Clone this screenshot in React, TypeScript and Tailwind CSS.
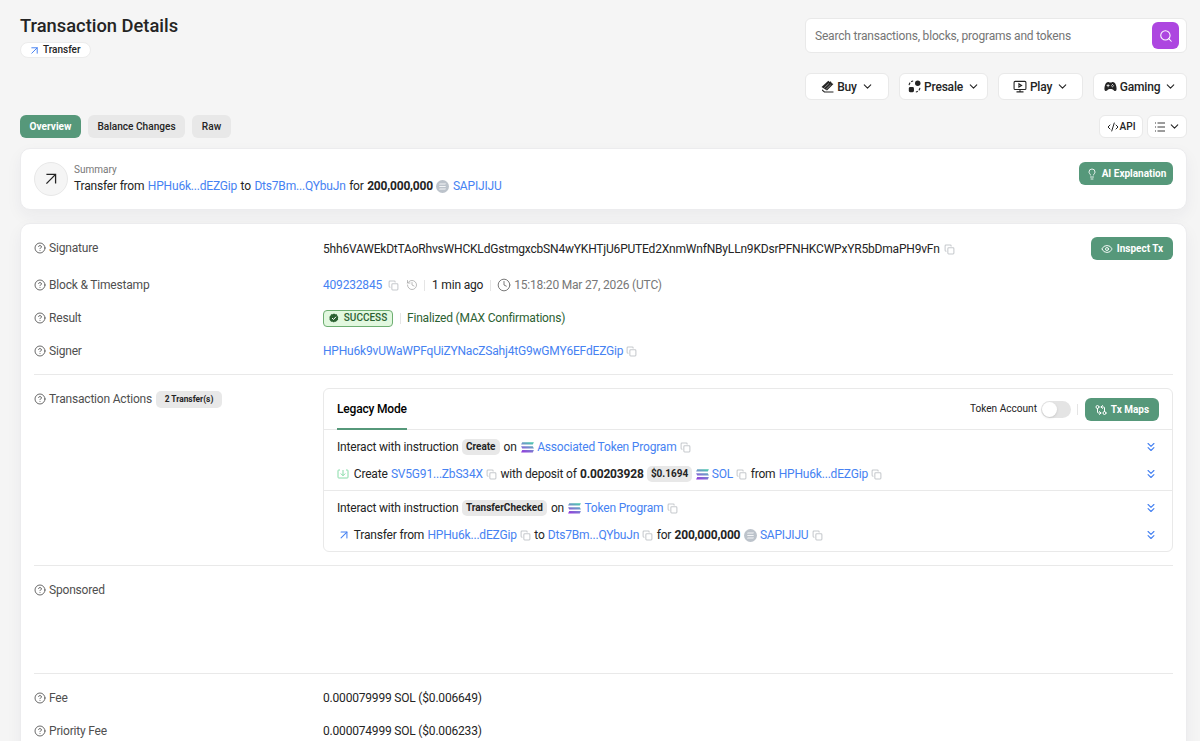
import type { ReactNode } from 'react';
import {
  ArrowUpRight,
  ChevronDown,
  ChevronsDown,
  CircleQuestionMark,
  Clock,
  CodeXml,
  Eye,
  GitCompareArrows,
  History,
  Lightbulb,
  Search,
} from 'lucide-react';
import { IoGameController } from 'react-icons/io5';

const CopyIcon = () => (
  <svg viewBox="0 0 20 20" className="size-[11px] shrink-0 text-[#c6c9cd]" fill="none" stroke="currentColor" strokeWidth="1.9">
    <rect x="7" y="7" width="11" height="11" rx="1.5" />
    <path d="M4.5 13H3.5A1.5 1.5 0 0 1 2 11.5V3.5A1.5 1.5 0 0 1 3.5 2H11.5A1.5 1.5 0 0 1 13 3.5V4.5" />
  </svg>
);

const SolanaIcon = () => (
  <svg viewBox="0 0 13 11" className="h-[11px] w-[13px] shrink-0">
    <defs>
      <linearGradient id="sol" x1="4" y1="11" x2="9" y2="0" gradientUnits="userSpaceOnUse">
        <stop offset="0" stopColor="#9140dc" />
        <stop offset="0.5" stopColor="#7a86cf" />
        <stop offset="1" stopColor="#4fc4b0" />
      </linearGradient>
    </defs>
    <path d="M1.2 0.3H12.9L11.8 2.6H0.1ZM0.1 4.2H11.8L12.9 6.5H1.2ZM1.2 8.1H12.9L11.8 10.4H0.1Z" fill="url(#sol)" />
  </svg>
);

const TokenIcon = () => (
  <svg viewBox="0 0 14 14" className="size-[13px] shrink-0">
    <circle cx="7" cy="7" r="7" fill="#bcc3cb" />
    <path d="M4 3.7H10.8L10 4.9H3.2ZM3.2 6.4H10L10.8 7.6H4ZM4 9.1H10.8L10 10.3H3.2Z" fill="#f3f5f7" />
  </svg>
);

const BuyIcon = () => (
  <svg viewBox="0 0 24 24" className="size-[13px] shrink-0" fill="currentColor">
    <path d="M1 13 13.5 1.5l2.500 2.300 2-1.300 2 3.500 3 1.500L11 19.500Z" />
    <path d="M2 17 7 21.200H23V23H6L2 19.800Z" />
    <path d="m6 14.500 8.500-8M9.500 17l8.500-8" stroke="#fff" strokeWidth="0.900" />
  </svg>
);

const PresaleIcon = () => (
  <svg viewBox="0 0 24 24" className="size-[13px] shrink-0" fill="currentColor">
    <circle cx="18" cy="6" r="5" />
    <rect x="1.500" y="13" width="9.500" height="9.500" rx="2.500" />
    <path d="M2 9.500C2.500 5.500 5.500 2.500 9.500 2M22 14.500c-.500 4-3.500 7-7.500 7.500" fill="none" stroke="currentColor" strokeWidth="2" strokeDasharray="5 2.500" />
  </svg>
);

const PlayIcon = () => (
  <svg viewBox="0 0 26 24" className="h-[13px] w-[14px] shrink-0" fill="none" stroke="currentColor" strokeWidth="2">
    <rect x="2" y="2.500" width="22" height="15" rx="2" />
    <path d="M13 18v4M6.500 22h13" />
    <path d="M11 7v6l5-3Z" />
  </svg>
);

const DepositIcon = () => (
  <svg viewBox="0 0 24 20" className="h-[10px] w-[12px] shrink-0 text-[#86dca7]" fill="none" stroke="currentColor" strokeWidth="2">
    <path d="M6 2H3.500A1.500 1.500 0 0 0 2 3.500v13A1.500 1.500 0 0 0 3.500 18h17a1.500 1.500 0 0 0 1.500-1.500v-13A1.500 1.500 0 0 0 20.500 2H18" />
    <path d="M12 2v11M7.500 9l4.500 4.500L16.500 9" />
  </svg>
);

const VerifiedIcon = () => (
  <svg viewBox="0 0 20 20" className="size-[10px] shrink-0">
    <path d="m10 1 2.500 1.500 3 .200 1.200 2.800 1.800 2.300-.500 2.900.200 2.900-2.500 1.700-1.800 2.300-3 .100L10 18.800l-2.600-1.100-3-.100-1.700-2.300-1.600-1.900.100-3-.300-2.800 1.900-2.300L4.300 2.700l3.200-.200Z" fill="#2c6132" />
    <path d="m6 10 3 3 5-5.500" fill="none" stroke="#fff" strokeWidth="2" />
  </svg>
);

const ListIcon = () => (
  <svg viewBox="0 0 24 24" className="size-[12px] shrink-0" fill="none" stroke="currentColor" strokeWidth="1.800">
    <path d="M7 4h15M7 12h15M7 20h15M2 4h2M2 12h2M2 20h2" />
  </svg>
);

const Link = ({ children }: { children: ReactNode }) => (
  <a href="#" className="text-[#4682f2]">{children}</a>
);

const Tag = ({ children }: { children: ReactNode }) => (
  <span className="flex h-4 items-center rounded-[5px] bg-[#e8e8e8] px-1 text-[10px] font-bold tracking-normal">{children}</span>
);

const Separator = () => <span className="h-[11px] w-px bg-[#e5e5e5]" />;

const NavButton = ({ icon, label, className }: { icon: ReactNode; label: string; className: string }) => (
  <button className={`flex h-[27px] items-center justify-center rounded-md border border-[#e9e9e9] bg-white font-medium ${className}`}>
    {icon}
    <span className="ml-[3px]">{label}</span>
    <ChevronDown size={13} strokeWidth={2} className="-mr-px ml-1" />
  </button>
);

const GreenButton = ({ icon, label, className }: { icon: ReactNode; label: string; className: string }) => (
  <button className={`flex h-[23px] shrink-0 items-center justify-center gap-1 rounded-md bg-[#56987a] pt-px text-[10px] font-bold tracking-normal text-white ${className}`}>
    {icon}
    {label}
  </button>
);

const Row = ({ label, extra, className, children }: { label: string; extra?: ReactNode; className: string; children?: ReactNode }) => (
  <div className={`flex ${className}`}>
    <div className="flex h-4 w-[289px] shrink-0 items-center text-[#4f4f4f]">
      <CircleQuestionMark size={12} strokeWidth={1.7} className="mr-[3px]" />
      {label}
      {extra}
    </div>
    {children}
  </div>
);

const Instruction = ({ children, className }: { children: ReactNode; className: string }) => (
  <div className={`flex h-4 items-center ${className}`}>
    {children}
    <ChevronsDown size={14} strokeWidth={2} className="ml-auto mr-px text-[#4682f2]" />
  </div>
);

const App = () => {
  return (
    <div className="h-[741px] overflow-hidden bg-[#f5f5f5] pl-5 pr-[13px] font-['Roboto',sans-serif] text-[12px] leading-4 tracking-[-0.19px] text-[#242424]">
      {/* Title and search */}
      <header className="flex h-[100px] justify-between">
        <div>
          <h1 className="mt-[15px] text-[18.33px] font-medium leading-[22px] tracking-normal">Transaction Details</h1>
          <div className="mt-[5px] flex h-4 w-[71px] items-center rounded-full border border-[#ececec] bg-white pl-[7px] text-[10px] font-medium tracking-normal">
            <ArrowUpRight size={13} strokeWidth={1.8} className="mr-[2px] text-[#4682f2]" />
            Transfer
          </div>
        </div>
        <div className="w-[382px]">
          <div className="mt-[18px] flex h-[35px] items-center rounded-md border border-[#e9e9e9] bg-white pl-[9px] pr-[7px] text-[#757575]">
            <span>Search transactions, blocks, programs and tokens</span>
            <button className="ml-auto flex size-[27px] items-center justify-center rounded-md bg-[#ad46e0] text-white">
              <Search size={14} strokeWidth={1.8} />
            </button>
          </div>
          <nav className="mt-5 flex justify-between">
            <NavButton className="w-[84px]" icon={<BuyIcon />} label="Buy" />
            <NavButton className="w-[89px]" icon={<PresaleIcon />} label="Presale" />
            <NavButton className="w-[85px]" icon={<PlayIcon />} label="Play" />
            <NavButton className="w-[94px]" icon={<IoGameController size={13} />} label="Gaming" />
          </nav>
        </div>
      </header>

      {/* Tabs */}
      <div className="mt-[15px] flex h-[23px] gap-[7px] text-[10.1px] font-medium tracking-normal">
        <button className="w-[61px] rounded-md bg-[#56987a] font-bold text-white">Overview</button>
        <button className="w-[97px] rounded-md bg-[#e8e8e8]">Balance Changes</button>
        <button className="w-[39px] rounded-md bg-[#e8e8e8]">Raw</button>
        <button className="ml-auto flex w-[44px] items-center justify-center gap-px rounded-md border border-[#e9e9e9] bg-white">
          <CodeXml size={12} />
          API
        </button>
        <button className="-ml-[3px] flex w-[40px] items-center justify-center gap-[2px] rounded-md border border-[#e9e9e9] bg-white">
          <ListIcon />
          <ChevronDown size={13} strokeWidth={2} />
        </button>
      </div>

      {/* Summary */}
      <section className="mt-[10px] flex h-[62px] rounded-[10px] border border-[#ececee] bg-white px-[13px] shadow-[0_6px_16px_rgba(30,40,70,0.05)]">
        <div className="mt-[13px] flex size-[34px] items-center justify-center rounded-full border border-[#e8e8e8] bg-[#f5f5f5]">
          <ArrowUpRight size={22} strokeWidth={1.4} strokeLinecap="butt" strokeLinejoin="miter" />
        </div>
        <div className="ml-[6px] mt-[13px]">
          <p className="text-[10px] leading-[15px] tracking-normal text-[#777]">Summary</p>
          <div className="mt-px flex items-center gap-[3.5px]">
            <span>Transfer from</span>
            <Link>HPHu6k...dEZGip</Link>
            <span>to</span>
            <Link>Dts7Bm...QYbuJn</Link>
            <span>for</span>
            <b>200,000,000</b>
            <TokenIcon />
            <Link>SAPIJIJU</Link>
          </div>
        </div>
        <GreenButton className="ml-auto mt-[13px] w-[94px]" icon={<Lightbulb size={12} strokeWidth={1.7} />} label="AI Explanation" />
      </section>

      {/* Transaction fields */}
      <section className="mt-[13px] h-[560px] rounded-t-[10px] border border-[#ececee] bg-white px-[13px] pt-[13px] shadow-[0_6px_16px_rgba(30,40,70,0.05)]">
        <Row label="Signature" className="h-[36px] pt-[3px]">
          <div className="mt-px flex h-4 items-center gap-1">
            5hh6VAWEkDtTAoRhvsWHCKLdGstmgxcbSN4wYKHTjU6PUTEd2XnmWnfNByLLn9KDsrPFNHKCWPxYR5bDmaPH9vFn
            <CopyIcon />
          </div>
          <GreenButton className="-mt-[3px] ml-auto w-[82px]" icon={<Eye size={12} strokeWidth={1.8} />} label="Inspect Tx" />
        </Row>
        <Row label="Block & Timestamp" className="h-[34px] pt-[4px]">
          <div className="flex h-4 items-center">
            <Link>409232845</Link>
            <span className="ml-[6px] mr-[7px]"><CopyIcon /></span>
            <History size={12} strokeWidth={1.6} className="mr-[6px] text-[#a8a8a8]" />
            <Separator />
            <span className="mx-[7px]">1 min ago</span>
            <Separator />
            <Clock size={14} strokeWidth={1.7} className="ml-[6px] mr-[3px] text-[#777]" />
            <span className="text-[#777]">15:18:20 Mar 27, 2026 (UTC)</span>
          </div>
        </Row>
        <Row label="Result" className="h-[33px] pt-[3px]">
          <div className="flex h-4 items-center text-[#2c6132]">
            <span className="mr-[7px] flex h-[17px] w-[70px] items-center justify-center gap-[5px] rounded border border-[#6eae72] bg-[#e2f8df] text-[10px] font-medium tracking-normal">
              <VerifiedIcon />
              SUCCESS
            </span>
            <Separator />
            <span className="ml-[6px]">Finalized (MAX Confirmations)</span>
          </div>
        </Row>
        <Row label="Signer" className="h-[34px] pt-[3px]">
          <div className="flex h-4 items-center gap-[3px]">
            <Link>HPHu6k9vUWaWPFqUiZYNacZSahj4tG9wGMY6EFdEZGip</Link>
            <CopyIcon />
          </div>
        </Row>

        <Row
          label="Transaction Actions"
          extra={<span className="ml-1 flex h-[17px] w-[66px] items-center justify-center rounded-[5px] bg-[#e8e8e8] text-[8.4px] font-bold tracking-normal text-[#242424]">2 Transfer(s)</span>}
          className="h-[191px] border-t border-[#e9e9e9] pt-[16px]"
        >
          <div className="-mt-[3px] h-[164px] flex-1 rounded-md border border-[#e9e9e9]">
            <div className="flex h-[41px] items-center border-b border-[#e9e9e9] px-[13px]">
              <div className="h-[41px] border-b-2 border-[#56987a] pt-3 font-medium text-black">Legacy Mode</div>
              <span className="ml-auto text-[10.1px] tracking-normal">Token Account</span>
              <span className="ml-1 mr-[6px] flex h-[17px] w-[30px] items-center rounded-full bg-[#e4e4e4] px-px">
                <span className="size-[15px] rounded-full bg-white shadow-sm" />
              </span>
              <Separator />
              <GreenButton className="ml-[7px] w-[74px]" icon={<GitCompareArrows size={12} strokeWidth={2} />} label="Tx Maps" />
            </div>
            <div className="flex h-[61px] flex-col border-b border-[#e9e9e9] px-[13px] pt-[9px]">
              <Instruction className="">
                <span className="mr-[3.5px]">Interact with instruction</span>
                <Tag>Create</Tag>
                <span className="mx-1">on</span>
                <SolanaIcon />
                <span className="mx-[3.5px]"><Link>Associated Token Program</Link></span>
                <CopyIcon />
              </Instruction>
              <Instruction className="mt-[11px] gap-[3.3px]">
                <DepositIcon />
                <span className="ml-[1.5px]">Create</span>
                <Link>SV5G91...ZbS34X</Link>
                <CopyIcon />
                <span>with deposit of</span>
                <b>0.00203928</b>
                <Tag>$0.1694</Tag>
                <SolanaIcon />
                <Link>SOL</Link>
                <CopyIcon />
                <span>from</span>
                <Link>HPHu6k...dEZGip</Link>
                <CopyIcon />
              </Instruction>
            </div>
            <div className="flex h-[61px] flex-col px-[13px] pt-[9px]">
              <Instruction className="">
                <span className="mr-[3.5px]">Interact with instruction</span>
                <Tag>TransferChecked</Tag>
                <span className="mx-1">on</span>
                <SolanaIcon />
                <span className="mx-[3.5px]"><Link>Token Program</Link></span>
                <CopyIcon />
              </Instruction>
              <Instruction className="mt-[11px] gap-[3.3px]">
                <ArrowUpRight size={14} strokeWidth={1.8} className="-mr-[0.5px] text-[#4682f2]" />
                <span>Transfer from</span>
                <Link>HPHu6k...dEZGip</Link>
                <CopyIcon />
                <span>to</span>
                <Link>Dts7Bm...QYbuJn</Link>
                <CopyIcon />
                <span>for</span>
                <b>200,000,000</b>
                <TokenIcon />
                <Link>SAPIJIJU</Link>
                <CopyIcon />
              </Instruction>
            </div>
          </div>
        </Row>

        <Row label="Sponsored" className="h-[108px] border-t border-[#e9e9e9] pt-[16px]" />
        <Row label="Fee" className="h-[34px] border-t border-[#e9e9e9] pt-[16px]">0.000079999 SOL ($0.006649)</Row>
        <Row label="Priority Fee" className="h-[33px] pt-[16px]">0.000074999 SOL ($0.006233)</Row>
      </section>
    </div>
  );
};

export default App;
